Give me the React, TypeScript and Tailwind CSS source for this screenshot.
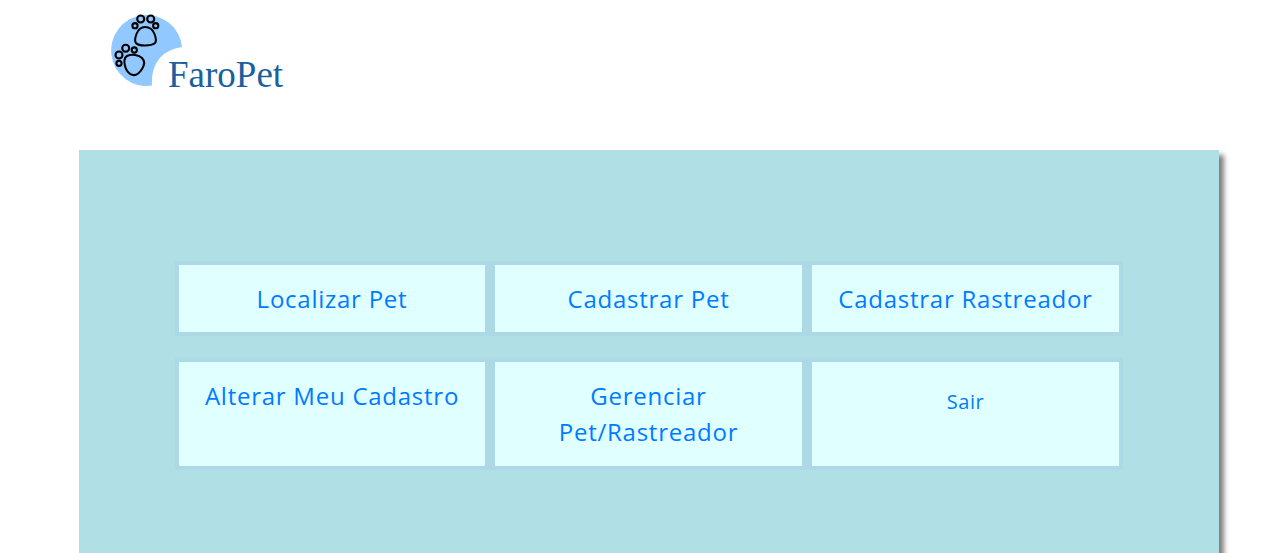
import React from 'react';

const Paw: React.FC<{ pad: string; toes: number[][] }> = ({ pad, toes }) => (
  <g fill="none" stroke="#000" strokeWidth="2.1">
    <path d={pad} />
    {toes.map(([cx, cy, r]) => (
      <circle key={`${cx}-${cy}`} cx={cx} cy={cy} r={r} />
    ))}
  </g>
);

const Logo: React.FC = () => (
  <div className="flex items-start pl-[105px] pt-[10px] h-[150px]">
    <svg width="85" height="80" viewBox="105 10 85 80" className="shrink-0">
      {/* blue circle with a bite taken out of the bottom right */}
      <path
        d="M182 47 A35.5 35.5 0 1 0 152 85.6 C151 62 163 50 182 47 Z"
        fill="#90c8ff"
      />
      <Paw
        pad="M145 27 C150 27 153 30 154.5 34 C156 38 157 41 155 43 C152 45.5 148 45.5 145 45.5 C142 45.5 138 45.5 136 43 C134 41 135 38 136.5 34 C138 30 140 27 145 27 Z"
        toes={[
          [135, 25.7, 2.6],
          [140.7, 19, 3.5],
          [150.7, 19, 3.5],
          [155.7, 25.7, 2.6],
        ]}
      />
      <Paw
        pad="M127 56 C132 53.5 139 55 142 58 C145 61 144.5 65 142 69 C139.5 73 136 75.5 133 75 C129 74.5 126 70 125 66 C124 62 123.5 58 127 56 Z"
        toes={[
          [119, 63.3, 2.6],
          [119, 55, 3.5],
          [125.7, 48.3, 3.5],
          [134.3, 50, 2.6],
        ]}
      />
    </svg>
    <span className="-ml-[22px] mt-[45px] font-['Liberation_Serif',serif] text-[37px] leading-[40px] text-[#1a5f9e]">
      FaroPet
    </span>
  </div>
);

const Cell: React.FC<{ children: React.ReactNode; small?: boolean; first?: boolean }> = ({
  children,
  small,
  first,
}) => (
  <a
    href="#"
    className={`${first ? 'w-[306px]' : 'w-[307px]'} bg-[#e0ffff] pt-[16px] pb-[15px] text-center text-[#007bff] ${
      small ? 'text-[20px] leading-[48px] tracking-[0.6px]' : 'text-[24px] leading-[36px] tracking-[0.75px]'
    }`}
  >
    {children}
  </a>
);

const App: React.FC = () => {
  return (
    <div className="h-[553px] overflow-hidden bg-white">
      <Logo />
      <main className="ml-[79px] w-[1140px] h-[500px] bg-[#b0e0e6] shadow-[5px_5px_5px_#808080] pt-[111px] pl-[96px] font-['Open_Sans',sans-serif]">
        <div className="w-[948px] flex gap-[10px] bg-[#add8e6] p-[4px]">
          <Cell first>Localizar Pet</Cell>
          <Cell>Cadastrar Pet</Cell>
          <Cell>Cadastrar Rastreador</Cell>
        </div>
        <div className="mt-[22px] w-[948px] h-[112px] flex gap-[10px] bg-[#add8e6] p-[4px]">
          <Cell first>Alterar Meu Cadastro</Cell>
          <Cell>
            Gerenciar
            <br />
            Pet/Rastreador
          </Cell>
          <Cell small>Sair</Cell>
        </div>
      </main>
    </div>
  );
};

export default App;
